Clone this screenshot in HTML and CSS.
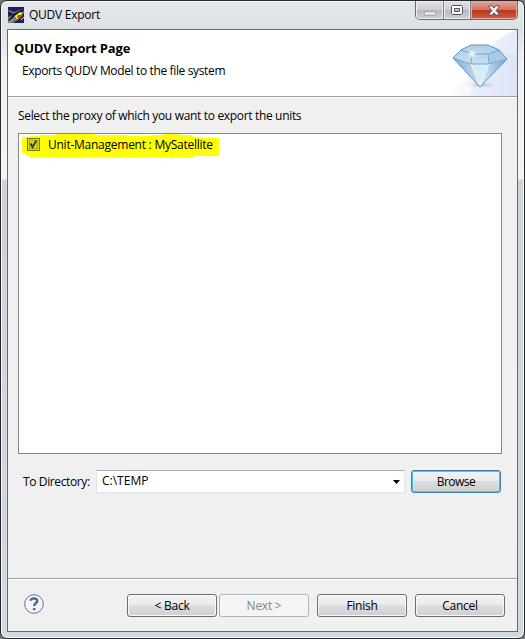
FILE: index.html
```html
<!DOCTYPE html>
<html lang="en">
<head>
<meta charset="utf-8">
<title>QUDV Export</title>
<link rel="stylesheet" href="styles.css">
</head>
<body>
<div class="window">
  <header class="titlebar">
    <svg class="app-icon" width="16" height="16" viewBox="0 0 16 16">
      <rect width="16" height="16" fill="#1c1c66"/>
      <path d="M0 10L5 8l11-4v12H0z" fill="#77737f"/>
      <path d="M5 16l6-4 5-6v10z" fill="#24204f"/>
      <path d="M0 3l6 2 8-3h2l-5 4-4 6-4 1 3-6-6-3z" fill="#7c8178"/>
      <path d="M1 14L7 7l8-4" fill="none" stroke="#171b18" stroke-width="2"/>
      <path d="M7 9l5-4 2 1-2 5-4 1z" fill="#f3e833"/>
      <path d="M10 8h3l-1 3H9z" fill="#e92818"/>
      <path d="M1 15l4-3M13 13l3-3" stroke="#ddd" stroke-width="1"/>
    </svg>
    <span class="caption">QUDV Export</span>
    <div class="controls">
      <span class="control minimize"><svg width="12" height="5"><rect x=".5" y=".5" width="11" height="4" rx=".5" fill="#e3e3e5" stroke="#a4a6aa"/></svg></span>
      <span class="control maximize"><svg width="12" height="10"><path fill="#fff" fill-rule="evenodd" stroke="#4c5060" d="M1.500.5h9l1 1v7l-1 1h-9l-1-1v-7zM3.500 3.500v3h5v-3z"/></svg></span>
      <span class="control close"><svg width="12" height="11" viewBox="0 0 13 11"><path d="M1 .5h3.500l2 2.500 2-2.500H12v1L8.800 5.500 12 9.500v1H8.500l-2-2.500-2 2.500H1v-1l3.200-4L1 1.500z" fill="#fff" stroke="#5e4850"/></svg></span>
    </div>
  </header>
  <main class="dialog">
    <section class="banner">
      <div class="headline">
        <h1>QUDV Export Page</h1>
        <p>Exports QUDV Model to the file system</p>
      </div>
      <svg class="diamond" width="75" height="66" viewBox="0 0 75 66">
        <defs>
          <linearGradient id="sky"><stop offset="0" stop-color="#fff"/><stop offset="1" stop-color="#e3e9f8"/></linearGradient>
          <linearGradient id="gem" x1="0" y1="0" x2="0" y2="1"><stop offset="0" stop-color="#b0cfe6"/><stop offset="1" stop-color="#e3f1fa"/></linearGradient>
          <linearGradient id="left"><stop offset="0" stop-color="#7fb0d8"/><stop offset="1" stop-color="#c4def0"/></linearGradient>
          <linearGradient id="side"><stop offset="0" stop-color="#d9ecf7"/><stop offset="1" stop-color="#77a6d0"/></linearGradient>
          <radialGradient id="shade"><stop offset="0" stop-color="#a99aa8" stop-opacity=".7"/><stop offset="1" stop-color="#fff" stop-opacity="0"/></radialGradient>
          <radialGradient id="glint"><stop offset="0" stop-color="#fffff0"/><stop offset="1" stop-color="#fff" stop-opacity="0"/></radialGradient>
        </defs>
        <path d="M0 66C30 51 43 9 75 0v66z" fill="url(#sky)"/>
        <path d="M28 66c4-23 22-40 47-44v44z" fill="#d3dcf4" opacity=".3"/>
        <g transform="translate(3 0)">
          <ellipse cx="37" cy="55" rx="20" ry="4" fill="url(#shade)"/>
          <path d="M8 28l8-8 10-5h17l11 5 8 9-27 28z" fill="url(#gem)"/>
          <path d="M8 28l18 6 9 23z" fill="url(#left)"/>
          <path d="M26 34h18l-9 23z" fill="#d7eaf6"/>
          <path d="M44 34l18-5-27 28z" fill="url(#side)"/>
          <path d="M44 24l10-4 8 9-18 5z" fill="#a8cae5"/>
          <path d="M8 28l18 6h18l18-5M16 20l11 4h16l11-4M27 24l-1 10M43 24l1 10" fill="none" stroke="#79a6d6"/>
          <path d="M26 34l9 22 9-22" fill="none" stroke="#f2f9fd"/>
          <path d="M8 28l8-8 10-5h17l11 5 8 9-27 28z" fill="none" stroke="#5d93c4"/>
          <circle cx="27" cy="24" r="5" fill="url(#glint)"/>
        </g>
      </svg>
    </section>
    <section class="content">
      <label class="prompt">Select the proxy of which you want to export the units</label>
      <div class="list">
        <div class="item">
          <svg class="marker" width="198" height="26" viewBox="0 0 198 26"><path fill="#ff0" d="M0 6h8V5h9V4h17V3h39v1h33v1h23V4h12V3h17v1h13v2h9v1h17v18H172v1h-20v1h-12v-1h-6v1h-23v2H52v-1H41v-1h-5v1H17v-2H8v-2H4v-2H0z"/></svg>
          <svg class="check" width="13" height="13"><rect x=".5" y=".5" width="12" height="12" fill="#d8d824" stroke="#77770f"/><path d="M2.500 2.500h8v8h-8z" fill="none" stroke="#a9a928"/><path d="M3.500 5.500l2 3.500 4-6.500" fill="none" stroke="#3b4410" stroke-width="2"/></svg>
          <span class="item-text">Unit-Management : MySatellite</span>
        </div>
      </div>
      <div class="directory">
        <label class="dir-label">To Directory:</label>
        <div class="combo"><span class="dir-value">C:\TEMP</span><svg width="7" height="4"><path d="M0 0h7L3.500 4z"/></svg></div>
        <button class="focused">Browse</button>
      </div>
    </section>
    <footer class="footer">
      <svg class="help" width="20" height="20" viewBox="0 0 20 20"><circle cx="10" cy="10" r="9.300" fill="#f4f5f8" stroke="#5f7293"/><path d="M6.700 6.800C6.800 3.600 13.300 3.600 13.200 7c0 2.400-3 2.300-3 5M10.200 14v2.200" fill="none" stroke="#53698d" stroke-width="2.500"/></svg>
      <button>&lt; Back</button>
      <button class="next" disabled>Next &gt;</button>
      <button class="finish">Finish</button>
      <button class="cancel">Cancel</button>
    </footer>
  </main>
</div>
</body>
</html>
```
FILE: styles.css
```css
* { box-sizing: border-box; }
body { margin: 0; background: #777; font: 12px/16px "Open Sans", "Noto Sans", sans-serif; color: #000; overflow: hidden; }
svg { display: block; flex: none; }
span, label, h1, p { white-space: nowrap; }
.window { width: 525px; height: 639px; padding: 0 6px 6px; border: 1px solid #25272b; border-radius: 7px; background: linear-gradient(#e3e7ea, #dce1e5 28px, #f1f0f2 60px, #f4f2f3 178px, #ced4da 179px, #d2dae1); box-shadow: inset 0 0 0 1px #f6f8f9; }
.titlebar { height: 28px; display: flex; align-items: flex-start; padding-left: 1px; }
.app-icon { margin-top: 6px; }
.caption { margin: 6px 0 0 5px; letter-spacing: -.25px; }
.controls { display: flex; margin-left: auto; height: 19px; border: 1px solid #696d73; border-top: 0; border-radius: 0 0 5px 5px; overflow: hidden; }
.control { display: flex; align-items: center; justify-content: center; background: linear-gradient(#dfe1e4, #cccfd3 48%, #b5b8bf 50%, #cfd2d8); box-shadow: inset 0 0 0 1px #eceef0; }
.minimize { width: 27px; padding-top: 6px; }
.maximize { width: 28px; border: 1px solid #777b82; border-width: 0 1px; }
.close { width: 46px; background: linear-gradient(#e4a598, #d27563 48%, #b93419 50%, #ce6249); box-shadow: inset 0 0 0 1px #e8a99b; }
.dialog { height: 603px; border: 1px solid #66696d; background: #f0f0f0; display: flex; flex-direction: column; }
.banner { height: 67px; background: #fff; border-bottom: 1px solid #a0a0a0; display: flex; justify-content: space-between; }
.headline { padding: 10px 0 0 6px; }
h1 { margin: 0; font-size: 13px; line-height: 16px; letter-spacing: -.15px; }
p { margin: 7px 0 0 8px; letter-spacing: -.36px; }
.content { flex: 1; padding: 10px 0 0 10px; border-top: 1px solid #fff; }
.prompt { display: block; height: 25px; letter-spacing: -.33px; }
.list { width: 484px; height: 321px; border: 1px solid #828790; background: #fff; }
.item { position: relative; height: 22px; display: flex; align-items: center; padding-left: 8px; }
.marker { position: absolute; left: 3px; top: -3px; }
.check, .item-text { position: relative; }
.check { top: -1px; }
.item-text { margin-left: 8px; letter-spacing: -.25px; }
.directory { display: flex; align-items: center; padding: 16px 0 0 5px; }
.dir-label { width: 73px; letter-spacing: -.38px; }
.combo { width: 309px; height: 23px; background: #fff; border: 1px solid #e2e3ea; border-top-color: #abadb3; border-radius: 1px; display: flex; align-items: center; justify-content: space-between; padding: 0 4px 0 5px; }
.dir-value { padding-bottom: 2px; }
button { width: 90px; height: 23px; padding: 0; border: 1px solid #707070; border-radius: 3px; background: linear-gradient(#f2f2f2, #ebebeb 49%, #ddd 50%, #cfcfcf); box-shadow: inset 0 0 0 1px #f8f8f8; font: inherit; letter-spacing: -.25px; color: #000; }
.focused { margin-left: 6px; border-color: #3c7fb1; box-shadow: inset 0 0 0 1px #45c8f1; letter-spacing: -.5px; }
.footer { height: 53px; border-top: 1px solid #a0a0a0; box-shadow: inset 0 1px #fff; display: flex; align-items: flex-start; padding: 15px 0 0 119px; position: relative; }
.help { position: absolute; left: 16px; top: 15px; }
.next { margin-left: 2px; border-color: #adb2b5; background: #f4f4f4; color: #838383; }
.finish, .cancel { margin-left: 8px; }
```
